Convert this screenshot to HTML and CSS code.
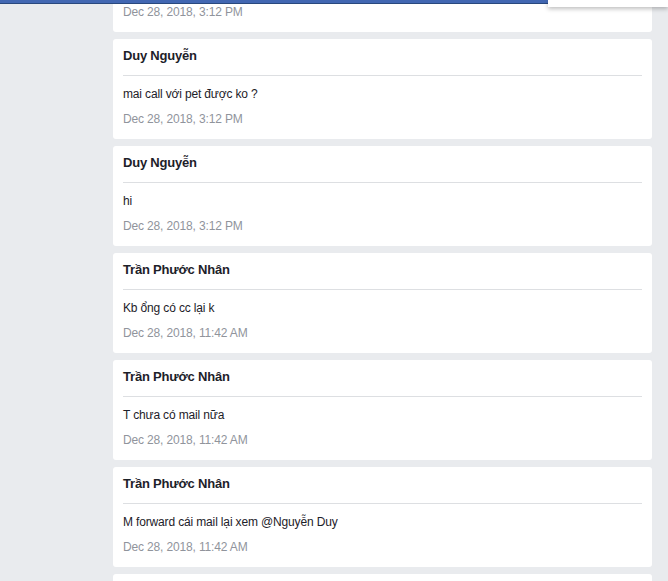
FILE: index.html
```html
<!DOCTYPE html>
<html lang="vi">
<head>
<meta charset="utf-8">
<title>Comments</title>
<link rel="stylesheet" href="styles.css">
</head>
<body>
<div class="topbar"></div>
<div class="popup"></div>
<main class="feed">
  <section class="card">
    <h3 class="name">Duy Nguyễn</h3>
    <hr class="sep">
    <p class="msg">hello</p>
    <p class="date">Dec 28, 2018, 3:12 PM</p>
  </section>
  <section class="card">
    <h3 class="name">Duy Nguyễn</h3>
    <hr class="sep">
    <p class="msg">mai call với pet được ko ?</p>
    <p class="date">Dec 28, 2018, 3:12 PM</p>
  </section>
  <section class="card">
    <h3 class="name">Duy Nguyễn</h3>
    <hr class="sep">
    <p class="msg">hi</p>
    <p class="date">Dec 28, 2018, 3:12 PM</p>
  </section>
  <section class="card">
    <h3 class="name">Trần Phước Nhân</h3>
    <hr class="sep">
    <p class="msg">Kb ổng có cc lại k</p>
    <p class="date">Dec 28, 2018, 11:42 AM</p>
  </section>
  <section class="card">
    <h3 class="name">Trần Phước Nhân</h3>
    <hr class="sep">
    <p class="msg">T chưa có mail nữa</p>
    <p class="date">Dec 28, 2018, 11:42 AM</p>
  </section>
  <section class="card">
    <h3 class="name">Trần Phước Nhân</h3>
    <hr class="sep">
    <p class="msg">M forward cái mail lại xem @Nguyễn Duy</p>
    <p class="date">Dec 28, 2018, 11:42 AM</p>
  </section>
  <section class="card">
    <h3 class="name">Trần Phước Nhân</h3>
    <hr class="sep">
    <p class="msg">ok</p>
    <p class="date">Dec 28, 2018, 11:42 AM</p>
  </section>
</main>
</body>
</html>
```

FILE: styles.css
```css
html, body {
  margin: 0;
  padding: 0;
  background: #e9ebee;
  font-family: "Liberation Sans", Arial, sans-serif;
  color: #1d2129;
  overflow: hidden;
}

.topbar {
  position: fixed;
  top: 0;
  left: 0;
  right: 0;
  height: 3px;
  background: #4267b2;
  border-bottom: 1px solid #29487d;
  z-index: 5;
}

.popup {
  position: fixed;
  top: 0;
  left: 548px;
  right: 0;
  height: 7px;
  background: #fff;
  box-shadow: 0 2px 4px rgba(0, 0, 0, 0.25);
  z-index: 6;
}

.feed {
  display: flex;
  flex-direction: column;
  gap: 7px;
  width: 539px;
  margin: -68px 0 0 113px;
}

.card {
  background: #fff;
  border-radius: 3px;
  padding: 9px 10px 12px;
  height: 100px;
  box-sizing: border-box;
  flex: none;
}

.name {
  margin: 0;
  font-size: 13px;
  line-height: 16px;
  font-weight: bold;
  letter-spacing: -0.2px;
  color: #1d2129;
}

.sep {
  margin: 11px 0 10px;
  border: 0;
  height: 1px;
  background: #dddfe2;
}

.msg {
  margin: 0;
  font-size: 12px;
  line-height: 16px;
  letter-spacing: -0.15px;
  color: #1d2129;
}

.date {
  margin: 9px 0 0;
  font-size: 12px;
  line-height: 16px;
  letter-spacing: -0.15px;
  color: #90949c;
}
```
